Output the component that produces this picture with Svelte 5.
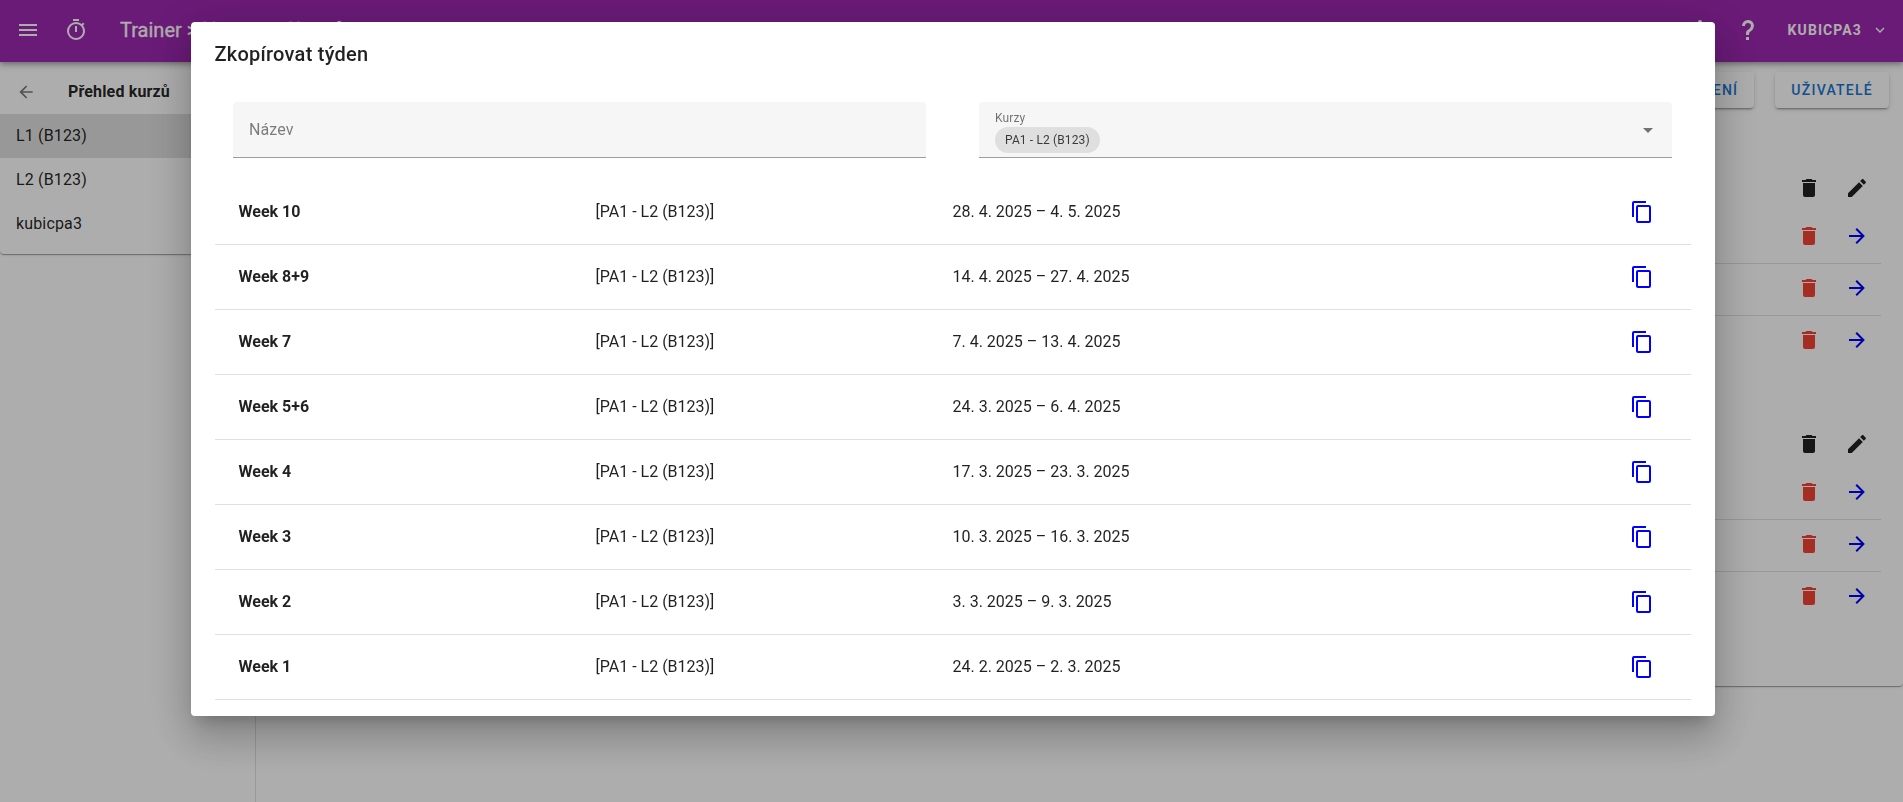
<script>
  const weeks = [
    ['Week 10', '28. 4. 2025 – 4. 5. 2025'],
    ['Week 8+9', '14. 4. 2025 – 27. 4. 2025'],
    ['Week 7', '7. 4. 2025 – 13. 4. 2025'],
    ['Week 5+6', '24. 3. 2025 – 6. 4. 2025'],
    ['Week 4', '17. 3. 2025 – 23. 3. 2025'],
    ['Week 3', '10. 3. 2025 – 16. 3. 2025'],
    ['Week 2', '3. 3. 2025 – 9. 3. 2025'],
    ['Week 1', '24. 2. 2025 – 2. 3. 2025'],
  ];
  const courses = ['L1 (B123)', 'L2 (B123)', 'kubicpa3'];
  const icons = {
    menu: 'M3,6H21V8H3V6M3,11H21V13H3V11M3,16H21V18H3V16Z',
    timer: 'M12,20A7,7 0 0,1 5,13A7,7 0 0,1 12,6A7,7 0 0,1 19,13A7,7 0 0,1 12,20M19.03,7.39L20.45,5.97C20,5.46 19.55,5 19.04,4.56L17.62,6C16.07,4.74 14.12,4 12,4A9,9 0 0,0 3,13A9,9 0 0,0 12,22C17,22 21,17.97 21,13C21,10.88 20.26,8.93 19.03,7.39M11,14H13V8H11M15,1H9V3H15V1Z',
    back: 'M20,11V13H8L13.5,18.5L12.08,19.92L4.16,12L12.08,4.08L13.5,5.5L8,11H20Z',
    forward: 'M4,11V13H16L10.5,18.5L11.92,19.92L19.84,12L11.92,4.08L10.5,5.5L16,11H4Z',
    trash: 'M19,4H15.5L14.5,3H9.5L8.5,4H5V6H19M6,19A2,2 0 0,0 8,21H16A2,2 0 0,0 18,19V7H6V19Z',
    pencil: 'M20.71,7.04C21.1,6.65 21.1,6 20.71,5.63L18.37,3.29C18,2.9 17.35,2.9 16.96,3.29L15.12,5.12L18.87,8.87M3,17.25V21H6.75L17.81,9.93L14.06,6.18L3,17.25Z',
    copy: 'M19,21H8V7H19M19,5H8A2,2 0 0,0 6,7V21A2,2 0 0,0 8,23H19A2,2 0 0,0 21,21V7A2,2 0 0,0 19,5M16,1H4A2,2 0 0,0 2,3V17H4V3H16V1Z',
    help: 'M10,19H13V22H10V19M12,2C17.35,2.22 19.68,7.62 16.5,11.67C15.67,12.67 14.33,13.33 13.67,14.17C13,15 13,16 13,17H10C10,15.33 10,13.92 10.67,12.92C11.33,11.92 12.67,11.33 13.5,10.67C15.92,8.43 15.32,5.26 12,5A3,3 0 0,0 9,8H6A6,6 0 0,1 12,2Z',
    chevron: 'M7.41,8.58L12,13.17L16.59,8.58L18,10L12,16L6,10L7.41,8.58Z',
    bell: 'M21,19V20H3V19L5,17V11C5,7.9 7.03,5.17 10,4.29C10,4.19 10,4.1 10,4A2,2 0 0,1 12,2A2,2 0 0,1 14,4C14,4.1 14,4.19 14,4.29C16.97,5.17 19,7.9 19,11V17L21,19Z',
    caret: 'M7,10L12,15L17,10H7Z',
  };
</script>

{#snippet icon(name, size)}
  <svg width={size} height={size} viewBox="0 0 24 24" fill="currentColor"><path d={icons[name]} /></svg>
{/snippet}

<div class="page">
  <header>
    <span class="menu">{@render icon('menu', 24)}</span>
    <span class="timer">{@render icon('timer', 24)}</span>
    <span class="crumbs">Trainer &gt; Nastavení kurzů</span>
    <span class="bell">{@render icon('bell', 24)}</span>
    <span class="help">{@render icon('help', 24)}</span>
    <span class="user">kubicpa3</span>
    {@render icon('chevron', 18)}
  </header>
  <div class="body">
    <aside>
      <nav>
        <div class="heading">{@render icon('back', 20)}<b>Přehled kurzů</b></div>
        {#each courses as course, i}
          <div class="course" class:active={i === 0}>{course}</div>
        {/each}
      </nav>
    </aside>
    <main>
      <section>
        <div class="actions"><button>Nastavení</button><button>Uživatelé</button></div>
        {#each [0, 1] as group}
          <div class="group">
            <div class="tools">{@render icon('trash', 24)}{@render icon('pencil', 24)}</div>
            {#each [0, 1, 2] as item}
              <div class="tools item">
                <span class="red">{@render icon('trash', 24)}</span>
                <span class="blue">{@render icon('forward', 24)}</span>
              </div>
            {/each}
          </div>
        {/each}
      </section>
    </main>
  </div>
</div>

<div class="scrim">
  <div class="dialog">
    <h2>Zkopírovat týden</h2>
    <div class="fields">
      <div class="field empty">Název</div>
      <div class="field select">
        <div class="value"><small>Kurzy</small><span class="chip">PA1 - L2 (B123)</span></div>
        <span class="caret">{@render icon('caret', 24)}</span>
      </div>
    </div>
    {#each weeks as [name, dates]}
      <div class="week">
        <b>{name}</b><span>[PA1 - L2 (B123)]</span><span>{dates}</span>
        <span class="copy">{@render icon('copy', 24)}</span>
      </div>
    {/each}
  </div>
</div>

<style>
  :global(body) { margin: 0; overflow: hidden; }
  .page, .scrim { font-family: Roboto, sans-serif; font-size: 16px; color: rgba(0, 0, 0, .87); box-sizing: border-box; }
  .page *, .scrim * { box-sizing: border-box; }
  svg { display: block; flex: none; }
  .page { height: 802px; display: flex; flex-direction: column; background: #fff; overflow: hidden; }
  header { height: 62px; flex: none; display: flex; align-items: center; padding: 0 14px 2px 16px; background: #9c27b0; color: #fff; position: relative;
    box-shadow: 0 2px 4px -1px rgba(0,0,0,.2), 0 4px 5px rgba(0,0,0,.14), 0 1px 10px rgba(0,0,0,.12); }
  .timer { margin-left: 24px; }
  .crumbs { margin-left: 32px; font-size: 20px; flex: 1; -webkit-text-stroke: .3px currentColor; }
  .help { margin-left: 24px; }
  .user { margin: 0 9px 0 28px; font-size: 14px; font-weight: 700; letter-spacing: 1.1px; text-transform: uppercase; }
  .body { flex: 1; display: flex; }
  aside { width: 256px; border-right: 1px solid rgba(0,0,0,.12); }
  nav { height: 192px; border-radius: 4px; box-shadow: 0 2px 1px -1px rgba(0,0,0,.2), 0 1px 1px rgba(0,0,0,.14), 0 1px 3px rgba(0,0,0,.12); }
  .heading { height: 52px; padding: 7px 16px 0; display: flex; align-items: center; gap: 32px; }
  .heading svg { opacity: .6; }
  .heading b { font-weight: 700; letter-spacing: .15px; }
  .course { height: 44px; padding: 0 0 2px 16px; display: flex; align-items: center; letter-spacing: .15px; }
  .active { background: rgba(0,0,0,.12); }
  main { flex: 1; }
  section { height: 624px; border-radius: 4px; box-shadow: 0 2px 1px -1px rgba(0,0,0,.2), 0 1px 1px rgba(0,0,0,.14), 0 1px 3px rgba(0,0,0,.12); padding: 10px 14px 0 0; }
  .actions { display: flex; justify-content: flex-end; gap: 21px; margin-bottom: 56px; }
  button { font: 500 14px Roboto, sans-serif; letter-spacing: 1.25px; text-transform: uppercase; height: 36px; padding: 0 16px; border: 0; border-radius: 4px; background: #fff; color: #1976d2;
    box-shadow: 0 3px 1px -2px rgba(0,0,0,.2), 0 2px 2px rgba(0,0,0,.14), 0 1px 5px rgba(0,0,0,.12); }
  .group { margin: 0 8px 56px 24px; height: 200px; }
  .tools { height: 48px; display: flex; justify-content: flex-end; align-items: center; gap: 24px; padding-right: 12px; }
  .item { height: 52px; border-bottom: 1px solid rgba(0,0,0,.12); padding-bottom: 3px; }
  .item:last-child { border-color: transparent; }
  .red { color: #f44336; }
  .blue, .copy { color: #00f; }
  .scrim { position: fixed; inset: 0; background: rgba(0,0,0,.32); padding: 22px 188px 0 191px; }
  .dialog { height: 694px; background: #fff; border-radius: 4px; padding: 0 24px; overflow: hidden;
    box-shadow: 0 11px 15px -7px rgba(0,0,0,.2), 0 24px 38px 3px rgba(0,0,0,.14), 0 9px 46px 8px rgba(0,0,0,.12); }
  h2 { margin: 0; height: 80px; padding-top: 16px; font-size: 20px; line-height: 32px; font-weight: 500; letter-spacing: .25px; text-indent: -.5px; }
  .fields { display: grid; grid-template-columns: 1fr 1fr; gap: 53px; padding: 0 19px 0 18px; margin-bottom: 22px; }
  .field { height: 56px; background: #f6f6f6; border-bottom: 1px solid #9e9e9e; border-radius: 4px 4px 0 0; padding: 0 16px; display: flex; align-items: center; }
  .empty { color: rgba(0,0,0,.5); letter-spacing: .1px; }
  .select { justify-content: space-between; padding-right: 12px; }
  .value { display: flex; flex-direction: column; align-items: flex-start; padding-top: 3px; }
  small { font-size: 12px; line-height: 16px; letter-spacing: .1px; color: rgba(0,0,0,.54); }
  .chip { height: 26px; margin-top: 1px; border-radius: 13px; background: #dfdfdf; color: rgba(0,0,0,.75); font-size: 12px; letter-spacing: .13px; padding: 0 10px; line-height: 26px; }
  .caret { color: rgba(0,0,0,.54); }
  .week { height: 65px; border-bottom: 1px solid rgba(0,0,0,.12); display: grid; grid-template-columns: repeat(4, 1fr); align-items: center; padding: 0 24.5px 0 23.5px; }
  .week > :not(.copy) { padding-bottom: 2px; }
  .week b { font-weight: 700; }
  .copy { justify-self: end; padding-right: 12.5px; }
</style>
